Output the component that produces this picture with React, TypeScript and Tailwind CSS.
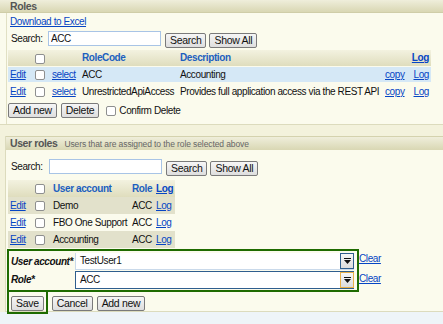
import React from "react";

const Btn = ({ children, className = "" }: { children: React.ReactNode; className?: string }) => (
  <button
    className={
      "h-[15px] px-[4px] border border-[#7a7a7a] rounded-[2px] bg-gradient-to-b from-[#f6f6f6] to-[#dedede] text-[#111] text-[10.5px] leading-[13px] tracking-[-0.3px] " +
      className
    }
  >
    {children}
  </button>
);

const Cb = () => (
  <span className="inline-block w-[10px] h-[10px] border border-[#8e8f8f] rounded-[2px] bg-white align-middle" />
);

const Lnk = ({ children, className = "" }: { children: React.ReactNode; className?: string }) => (
  <a className={"text-[#0645c4] underline " + className}>{children}</a>
);

const DropBtn = ({ focus }: { focus?: boolean }) => (
  <span
    className={
      "flex items-center justify-center w-[14px] h-[16px] border bg-gradient-to-b from-[#f7f7f7] to-[#dcdcdc] " +
      (focus ? "border-[#e8b04a]" : "border-[#2f5e8e]")
    }
  >
    <svg width="7" height="6" viewBox="0 0 7 6">
      <rect x="0" y="0" width="7" height="1" fill="#111" />
      <polygon points="0,2 7,2 3.5,6" fill="#111" />
    </svg>
  </span>
);

export default function App() {
  return (
    <div
      className="w-[443px] h-[324px] overflow-hidden bg-[#f3f2dc] text-[10px] text-[#111] tracking-[-0.4px]"
      style={{ fontFamily: '"Liberation Sans", Arial, sans-serif' }}
    >
      {/* Roles panel */}
      <div className="h-[125px] border-b border-[#dcdbbd] bg-[#fbfbed]">
        <div className="h-[13px] pl-[10px] bg-gradient-to-b from-[#efeedb] to-[#d9d7b3] border-b border-[#cfcda8] font-bold text-[#555] leading-[13px] text-[10.5px]">
          Roles
        </div>
        <div className="ml-[6px] border-l border-[#e1e0c4] h-[111px] pl-[1px]">
          <div className="pt-[3px] pl-[2px] leading-[12px]">
            <Lnk>Download to Excel</Lnk>
          </div>
          <div className="flex items-start h-[19px] mt-[3px]">
            <span className="pl-[3px] w-[40px] leading-[16px]">Search:</span>
            <input
              readOnly
              value="ACC"
              className="w-[113px] h-[15px] border border-[#a8c4e6] bg-white px-[2px] text-[10px] outline-none"
            />
            <Btn className="ml-[4px] mt-[2px]">Search</Btn>
            <Btn className="ml-[3px] mt-[2px]">Show All</Btn>
          </div>
          <table className="w-[423px] table-fixed border-collapse">
            <colgroup>
              <col className="w-[22px]" />
              <col className="w-[20px]" />
              <col className="w-[30px]" />
              <col className="w-[98px]" />
              <col className="w-[205px]" />
              <col className="w-[25px]" />
              <col className="w-[23px]" />
            </colgroup>
            <thead>
              <tr className="h-[16px] bg-gradient-to-b from-[#f3f2e0] to-[#dfddbd]">
                <th></th>
                <th className="text-left pl-[5px]"><Cb /></th>
                <th></th>
                <th className="text-left text-[#1c5fbf] font-bold pl-[2px]">RoleCode</th>
                <th className="text-left text-[#1c5fbf] font-bold pl-[2px]">Description</th>
                <th></th>
                <th className="text-right pr-[2px] font-bold"><Lnk>Log</Lnk></th>
              </tr>
            </thead>
            <tbody>
              <tr className="h-[16px] bg-[#d5e8f6] border-t border-[#fbfbed]">
                <td className="pl-[2px]"><Lnk>Edit</Lnk></td>
                <td className="pl-[5px]"><Cb /></td>
                <td className="pl-[2px]"><Lnk>select</Lnk></td>
                <td className="pl-[2px]">ACC</td>
                <td className="pl-[2px]">Accounting</td>
                <td className="pl-[2px]"><Lnk>copy</Lnk></td>
                <td className="text-right pr-[2px]"><Lnk>Log</Lnk></td>
              </tr>
              <tr className="h-[18px]">
                <td className="pl-[2px]"><Lnk>Edit</Lnk></td>
                <td className="pl-[5px]"><Cb /></td>
                <td className="pl-[2px]"><Lnk>select</Lnk></td>
                <td className="pl-[2px] whitespace-nowrap overflow-visible">UnrestrictedApiAccess</td>
                <td className="pl-[2px] whitespace-nowrap">Provides full application access via the REST API</td>
                <td className="pl-[2px]"><Lnk>copy</Lnk></td>
                <td className="text-right pr-[2px]"><Lnk>Log</Lnk></td>
              </tr>
            </tbody>
          </table>
          <div className="flex items-center mt-[3px] gap-[4px]">
            <Btn>Add new</Btn>
            <Btn>Delete</Btn>
            <span className="ml-[3px] flex items-center gap-[3px]">
              <Cb /> Confirm Delete
            </span>
          </div>
        </div>
      </div>

      {/* User roles panel */}
      <div className="mt-[11px] ml-[5px] h-[176px] border-l border-b border-[#dcdbbd] bg-[#fbfbed]">
        <div className="h-[14px] pl-[4px] flex items-baseline gap-[7px] bg-gradient-to-b from-[#efeedb] to-[#d9d7b3] border-t border-[#d4d2ae] leading-[13px]">
          <span className="font-bold text-[#555] text-[10.5px]">User roles</span>
          <span className="text-[#666] text-[8.5px] tracking-[-0.1px]">Users that are assigned to the role selected above</span>
        </div>
        <div className="pl-[2px]">
          <div className="flex items-start h-[21px] mt-[9px]">
            <span className="pl-[3px] w-[41px] leading-[16px]">Search:</span>
            <input
              readOnly
              value=""
              className="w-[113px] h-[15px] border border-[#a8c4e6] bg-white px-[2px] outline-none"
            />
            <Btn className="ml-[4px] mt-[2px]">Search</Btn>
            <Btn className="ml-[3px] mt-[2px]">Show All</Btn>
          </div>
          <table className="w-[167px] table-fixed border-collapse">
            <colgroup>
              <col className="w-[22px]" />
              <col className="w-[20px]" />
              <col className="w-[80px]" />
              <col className="w-[25px]" />
              <col className="w-[20px]" />
            </colgroup>
            <thead>
              <tr className="h-[17px] bg-gradient-to-b from-[#f3f2e0] to-[#dfddbd]">
                <th></th>
                <th className="text-left pl-[5px]"><Cb /></th>
                <th className="text-left text-[#1c5fbf] font-bold whitespace-nowrap pl-[3px]">User account</th>
                <th className="text-left text-[#1c5fbf] font-bold pl-[2px]">Role</th>
                <th className="text-left font-bold pl-[1px]"><Lnk>Log</Lnk></th>
              </tr>
            </thead>
            <tbody>
              {[
                ["Demo", true],
                ["FBO One Support", false],
                ["Accounting", true],
              ].map(([name, shade]) => (
                <tr key={name as string} className={"h-[17px] " + (shade ? "bg-[#e2e1cb]" : "")}>
                  <td className="pl-[2px]"><Lnk>Edit</Lnk></td>
                  <td className="pl-[5px]"><Cb /></td>
                  <td className="whitespace-nowrap pl-[3px]">{name}</td>
                  <td className="pl-[2px]">ACC</td>
                  <td className="pl-[1px]"><Lnk>Log</Lnk></td>
                </tr>
              ))}
            </tbody>
          </table>
          <div className="flex items-start -ml-[1px]">
            <div className="mt-[1px] w-[352px] border-2 border-[#1e6b00] pl-[2px] pt-[1px] pb-[1px]">
              <div className="flex items-center h-[18px]">
                <span className="w-[64px] font-bold italic whitespace-nowrap">User account*</span>
                <div className="flex-1 flex h-[17px] border-b border-[#c9d9ea] bg-white">
                  <span className="flex-1 pl-[4px] leading-[16px] border-l border-[#c9d9ea]">TestUser1</span>
                  <DropBtn />
                </div>
                <span className="w-[3px]" />
              </div>
              <div className="flex items-center h-[19px]">
                <span className="w-[64px] font-bold italic">Role*</span>
                <div className="flex-1 flex h-[18px] border border-[#2f5e8e] border-r-0 bg-white">
                  <span className="flex-1 pl-[4px] leading-[16px]">ACC</span>
                  <DropBtn focus />
                </div>
                <span className="w-[3px]" />
              </div>
            </div>
            <div className="flex flex-col mt-[4px] gap-[6px] leading-[14px]">
              <Lnk>Clear</Lnk>
              <Lnk>Clear</Lnk>
            </div>
          </div>
          <div className="flex items-start gap-[4px] -ml-[1px]">
            <div className="border-2 border-[#1e6b00] border-t-0 px-[2px] pt-[4px] pb-[1px]">
              <Btn>Save</Btn>
            </div>
            <Btn className="mt-[4px]">Cancel</Btn>
            <Btn className="mt-[4px]">Add new</Btn>
          </div>
        </div>
      </div>
      <div className="h-[20px] bg-[#eef4f8]" />
    </div>
  );
}
